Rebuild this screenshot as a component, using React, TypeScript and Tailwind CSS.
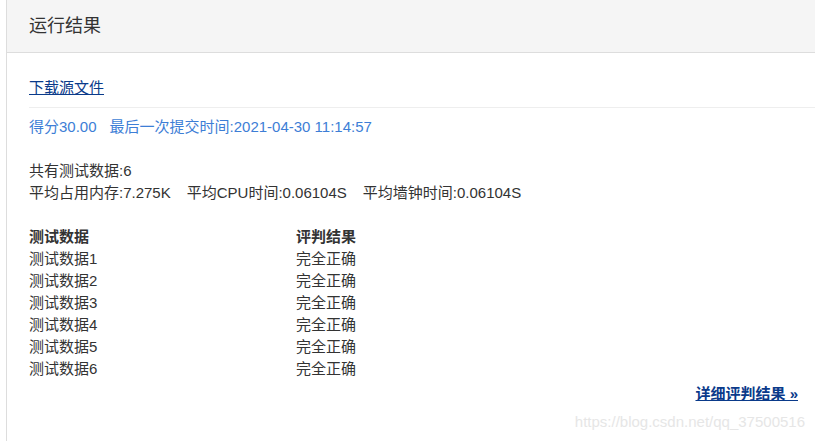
const rows = ['测试数据1', '测试数据2', '测试数据3', '测试数据4', '测试数据5', '测试数据6']

export default function App() {
  return (
    <div
      className="relative h-[441px] w-[815px] overflow-hidden bg-white pl-[6px] text-[15px] leading-[22px] text-[#333]"
      style={{ fontFamily: '"Liberation Sans", "Noto Sans CJK SC", sans-serif' }}
    >
      <div className="h-full border-l border-[#ddd]">
        <div className="flex h-[53px] items-center border-b border-[#ddd] bg-[#f5f5f5] px-[22px] pb-[1px] text-[18px]">
          运行结果
        </div>
        <div className="pl-[22px] pt-[24px]">
          <div className="border-b border-[#eee] pb-[8px]">
            <a href="#" className="text-[#0a3a8a] underline">
              下载源文件
            </a>
          </div>
          <div className="mt-[8px] flex gap-[13px] text-[#3d7ed6]">
            <span>得分30.00</span>
            <span>最后一次提交时间:2021-04-30 11:14:57</span>
          </div>
          <div className="mt-[22px]">共有测试数据:6</div>
          <div className="flex gap-[16px]">
            <span>平均占用内存:7.275K</span>
            <span>平均CPU时间:0.06104S</span>
            <span>平均墙钟时间:0.06104S</span>
          </div>
          <div className="mt-[22px] grid grid-cols-[267px_1fr]">
            <div className="font-bold">测试数据</div>
            <div className="font-bold">评判结果</div>
            {rows.map((r) => (
              <div key={r} className="contents">
                <div>{r}</div>
                <div>完全正确</div>
              </div>
            ))}
          </div>
          <div className="mt-[3px] flex justify-end pr-[17px]">
            <a href="#" className="font-bold text-[#0a3a8a] underline">
              详细评判结果 »
            </a>
          </div>
        </div>
      </div>
      <div className="absolute bottom-[8px] right-[10px] text-[15px] text-[#e6e6e6]">https://blog.csdn.net/qq_37500516</div>
    </div>
  )
}
